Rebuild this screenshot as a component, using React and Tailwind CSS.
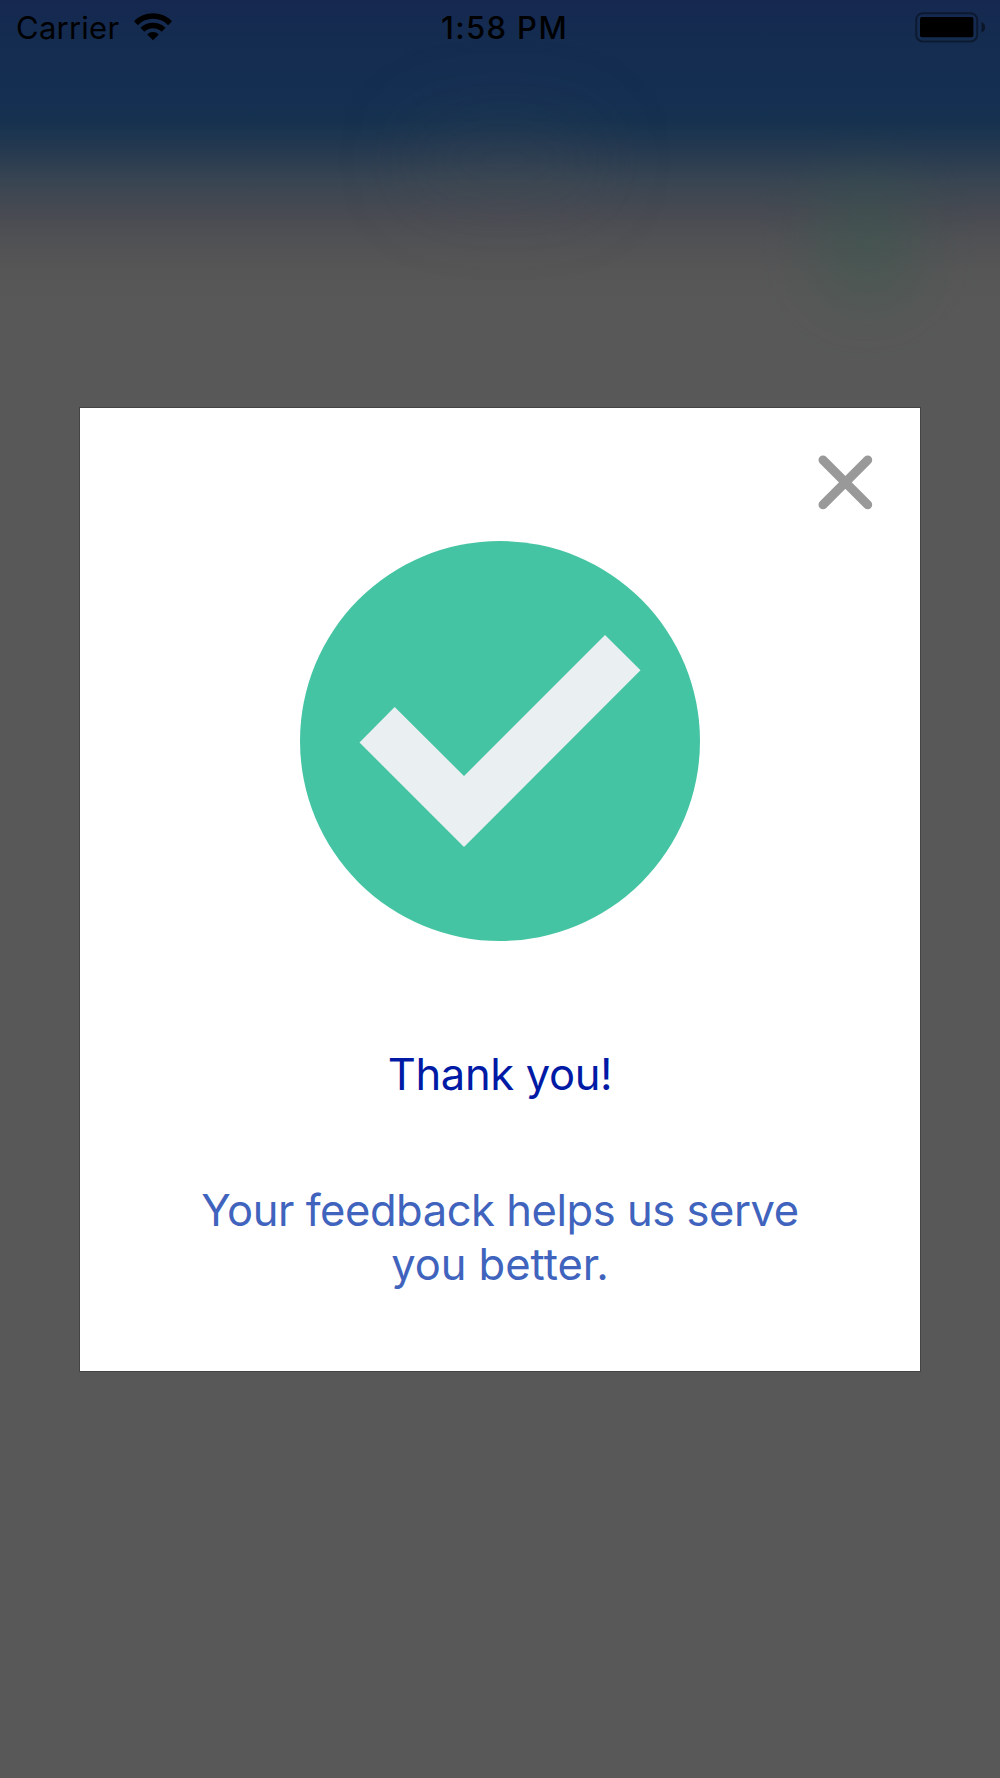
import React from 'react';

const WifiIcon = () => (
  <svg className="w-[38px] h-7" viewBox="0 0 38 28" fill="none">
    <path d="M1.9 10.2A24 24 0 0 1 36.1 10.2" stroke="black" strokeWidth="5.6" />
    <path d="M8.4 16.8A15.2 15.2 0 0 1 29.6 16.8" stroke="black" strokeWidth="5.6" />
    <path d="M19 27.3L13.2 21.4A8.3 8.3 0 0 1 24.8 21.4Z" fill="black" />
  </svg>
);

const BatteryIcon = () => (
  <svg className="w-[71px] h-[31px]" viewBox="0 0 71 31" fill="none">
    <rect x="1.2" y="1.2" width="61" height="28.2" rx="6.5" stroke="black" strokeOpacity="0.4" strokeWidth="2" />
    <rect x="5" y="5" width="53.4" height="20.3" rx="2" fill="black" />
    <path d="M66.5 10Q70.2 12 70.2 15.3T66.5 20.7Z" fill="black" fillOpacity="0.5" />
  </svg>
);

const StatusBar = () => (
  <header className="relative grid grid-cols-3 items-center h-[54px] pl-4 pr-[14px] text-[31px] leading-none text-black">
    <div className="flex items-center gap-[15px]">
      <span className="tracking-[0.25px]">Carrier</span>
      <WifiIcon />
    </div>
    <span className="text-center font-medium tracking-[1.4px] pl-[7px]">1:58 PM</span>
    <div className="flex justify-end">
      <BatteryIcon />
    </div>
  </header>
);

// Blurred page behind the dialog
const Backdrop = () => (
  <div className="absolute inset-0 overflow-hidden bg-[linear-gradient(180deg,#162850_0px,#142c50_40px,#142f52_100px,#15314f_120px,#253950_150px,#394552_182px,#474a52_212px,#505154_240px,#565656_272px,#585858_310px)]">
    <div className="absolute left-[410px] top-[120px] w-[190px] h-[80px] rounded-full bg-[#58585828] blur-[40px]" />
    <div className="absolute left-[822px] top-[180px] w-[90px] h-[120px] rounded-full bg-[#30594c] opacity-45 blur-[34px]" />
  </div>
);

const App = () => {
  return (
    <div className="relative w-[1000px] h-[1778px] overflow-hidden bg-[#585858] font-['Inter',sans-serif]">
      <Backdrop />
      <StatusBar />

      {/* Feedback dialog */}
      <main className="relative mt-[354px] mx-20 h-[963px] bg-white shadow-[0_0_0_1px_#444444] flex flex-col items-center">
        <button aria-label="Close" className="self-end mt-[47px] mr-[47px]">
          <svg className="w-[55px] h-[55px]" viewBox="0 0 55 55" fill="none">
            <path d="M5 5L49.7 49.7M49.7 5L5 49.7" stroke="#999999" strokeWidth="9" strokeLinecap="round" />
          </svg>
        </button>
        <svg className="mt-[31px] w-[400px] h-[400px] shrink-0" viewBox="0 0 400 400">
          <circle cx="200" cy="200" r="200" fill="#45C4A3" />
          <path d="M59.5 201.5L94.7 166L164 235L305 94L340.5 129.2L164 306Z" fill="#EAEFF2" />
        </svg>
        <h1 className="mt-[106px] text-[43.5px] leading-[54px] text-[#001aa5] tracking-[-0.35px]">Thank you!</h1>
        <p className="mt-[83px] text-center text-[43.5px] leading-[53.5px] text-[#4064bd] tracking-[-0.45px]">
          Your feedback helps us serve
          <br />
          <span className="tracking-[-0.05px]">you better.</span>
        </p>
      </main>
    </div>
  );
};

export default App;
